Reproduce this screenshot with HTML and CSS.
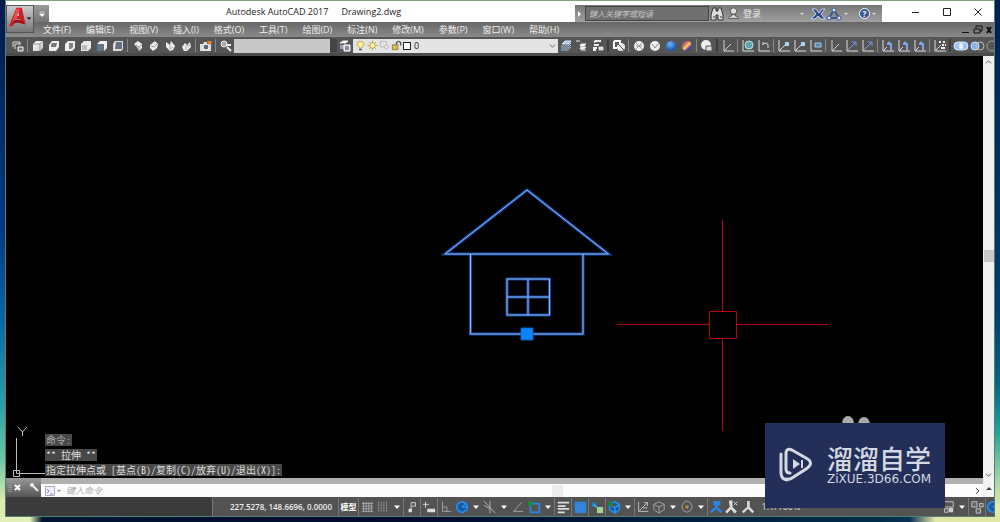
FILE: index.html
```html
<!DOCTYPE html>
<html lang="zh-CN">
<head>
<meta charset="utf-8">
<title>Autodesk AutoCAD 2017 Drawing2.dwg</title>
<link rel="stylesheet" href="styles.css">
</head>
<body>
<svg class="defs" aria-hidden="true">
  <defs>
    <linearGradient id="face" x1="0" y1="0" x2="1" y2="1"><stop offset="0" stop-color="#fff"/><stop offset="1" stop-color="#c4c4c4"/></linearGradient>
    <radialGradient id="blueball" cx=".4" cy=".3" r=".7"><stop offset="0" stop-color="#6bb5ff"/><stop offset="1" stop-color="#1454b0"/></radialGradient>
    <linearGradient id="goldball" x1="0" y1="0" x2="1" y2="1"><stop offset="0" stop-color="#8b40b0"/><stop offset=".3" stop-color="#c06a60"/><stop offset=".5" stop-color="#ffd060"/><stop offset=".7" stop-color="#6b3aa0"/><stop offset="1" stop-color="#4b2a90"/></linearGradient>
  </defs>
  <symbol id="views" viewBox="0 0 16 16"><path d="M3 9V4h7v2M5 11V6h6" fill="none" stroke="#ddd"/><path d="M8 9h5v4H8z" fill="#777" stroke="#fff"/></symbol>
  <symbol id="cube-top" viewBox="0 0 16 16"><path d="M3 6l3-3h7v7l-3 3H3z" fill="url(#face)"/><path d="M3 6h7v7M10 6l3-3" fill="none" stroke="#999"/></symbol>
  <symbol id="cube-bottom" viewBox="0 0 16 16"><path d="M3 7l3-4h7v6l-3 4H3z" fill="#eee"/><path d="M5 7l1-2h5l-1 4H5z" fill="#777"/></symbol>
  <symbol id="cube-left" viewBox="0 0 16 16"><path d="M3 6l3-3h7v7l-3 3H3z" fill="#ededed"/><path d="M7 5h4v4l-2 2H7z" fill="#808080"/></symbol>
  <symbol id="cube-front" viewBox="0 0 16 16"><path d="M3 6l3-3h7v7l-3 3H3z" fill="#e9e9e9"/><path d="M4 7h5v5H4z" fill="#bbb"/></symbol>
  <symbol id="cube-back" viewBox="0 0 16 16"><path d="M3 6l3-3h7v7l-3 3z" fill="#eee"/><path d="M3 6h7v7H3z" fill="#63728d"/></symbol>
  <symbol id="cube-right" viewBox="0 0 16 16"><path d="M3 6l2-3h8v8l-2 2H3z" fill="#ddd"/><path d="M6 4h6v7H5z" fill="#657080"/></symbol>
  <symbol id="iso-sw" viewBox="0 0 16 16"><path d="M4 6l4-3 4 3v4l-3 3-2-4z" fill="#eee"/><path d="M6 7l3 2 3-2M9 9v3" stroke="#999" fill="none"/></symbol>
  <symbol id="iso-nw" viewBox="0 0 16 16"><path d="M4 7l5-4 3 3-1 4-4 3-3-3z" fill="#eee"/><path d="M5 8l3 1 3-3" stroke="#999" fill="none"/></symbol>
  <symbol id="iso-se" viewBox="0 0 16 16"><path d="M4 4l4 3 1-4 4 5-2 4-3 1-4-4z" fill="#eee"/><path d="M8 7v4l3-2" stroke="#aaa" fill="none"/></symbol>
  <symbol id="iso-ne" viewBox="0 0 16 16"><path d="M12 4l-3 3-2-2-3 4 2 4h3l4-4z" fill="#eee"/><path d="M8 12V8l4-1" stroke="#aaa" fill="none"/></symbol>
  <symbol id="camera" viewBox="0 0 16 16"><path d="M2 6h3l1-2h3v2h4v7H2z" fill="#ddd"/><circle cx="8" cy="9" r="3" fill="#5b6877" stroke="#fff"/><path d="M9 3h4l1 2-3 2z" fill="#e98332"/></symbol>
  <symbol id="key" viewBox="0 0 16 16"><circle cx="6" cy="6" r="3" fill="#aaa" stroke="#eee"/><path d="M8 7h5M9 9l4 4" stroke="#eee" stroke-width="2"/></symbol>
  <symbol id="layerprops" viewBox="0 0 16 16"><path d="M3 5l3-2h5l-2 2zM3 8h5M3 10h5" fill="#fff" stroke="#eee"/><path d="M7 7h6v6H7z" fill="#ccd4e0" stroke="#fff"/><path d="M8 9h4M8 11h4" stroke="#446"/></symbol>
  <symbol id="layers-blue" viewBox="0 0 16 16"><path d="M4 6l3-3h6l-2 3z" fill="#a9c8ea" stroke="#d5e5f5"/><path d="M3 8h7l3-3M3 10h7l3-3M3 12h7l3-3" fill="none" stroke="#a2c0e0"/></symbol>
  <symbol id="layers" viewBox="0 0 16 16"><path d="M2 3h4M7 6h5l-2 2H6zM7 9h5l-2 2H6zM7 12h5" fill="#eee" stroke="#eee"/></symbol>
  <symbol id="layers-state" viewBox="0 0 16 16"><path d="M4 4l2-1h5M4 7h5M3 10h4M3 12h3" fill="none" stroke="#eee" stroke-width="2"/><path d="M8 8h6v5H8z" fill="#ddd" stroke="#444"/></symbol>
  <symbol id="match" viewBox="0 0 16 16"><path d="M3 3h6v3M3 3v7h3" fill="none" stroke="#fff" stroke-width="2"/><circle cx="10" cy="9" r="4" fill="#eee"/><path d="M7 6l6 6" stroke="#444"/></symbol>
  <symbol id="wire" viewBox="0 0 16 16"><circle cx="8" cy="8" r="5" fill="#eee"/><path d="M5 5l6 6M11 5l-6 6M5 8h6" stroke="#999"/></symbol>
  <symbol id="hidden" viewBox="0 0 16 16"><circle cx="8" cy="8" r="5" fill="#eee"/><path d="M5 6l3 4 4-5" stroke="#888" fill="none"/></symbol>
  <symbol id="realistic" viewBox="0 0 16 16"><circle cx="8" cy="8" r="5" fill="url(#blueball)"/></symbol>
  <symbol id="concept" viewBox="0 0 16 16"><circle cx="8" cy="8" r="5" fill="url(#goldball)"/></symbol>
  <symbol id="render" viewBox="0 0 16 16"><circle cx="7" cy="7" r="5" fill="#eee"/><path d="M7 8h6v5H7z" fill="#ddd" stroke="#555"/></symbol>
  <symbol id="ucs" viewBox="0 0 16 16"><path d="M4 2v11h10M4 13l7-7" fill="none" stroke="#ccd0d8"/></symbol>
  <symbol id="ucs-world" viewBox="0 0 16 16"><path d="M3 2v11h11" fill="none" stroke="#ddd"/><circle cx="9" cy="7" r="4" fill="#64a6b0" stroke="#bee3e5"/></symbol>
  <symbol id="ucs-prev" viewBox="0 0 16 16"><path d="M3 2v11h11M7 7V4M7 6q6-3 5 4" fill="none" stroke="#ddd"/></symbol>
  <symbol id="ucs-face" viewBox="0 0 16 16"><path d="M3 2v11h11M3 13l6-6" fill="none" stroke="#ddd"/><path d="M9 4h4v4H9z" fill="#a9d2f0"/></symbol>
  <symbol id="ucs-view" viewBox="0 0 16 16"><path d="M3 2v11h11" fill="none" stroke="#ddd"/><path d="M7 5h6v4H7z" fill="#4c87bb" stroke="#a7cbe8"/></symbol>
  <symbol id="ucs-z" viewBox="0 0 16 16"><path d="M3 2v11h11" fill="none" stroke="#ddd"/><path d="M4 12l8-8M8 4h4v4" fill="none" stroke="#779bee"/></symbol>
  <symbol id="ucs-rot" viewBox="0 0 16 16"><path d="M3 2v11h11M3 13l4-4" fill="none" stroke="#ddd"/><path d="M11 12V6L8 4M11 6H7" fill="none" stroke="#86a3e4" stroke-width="2"/></symbol>
  <symbol id="ucs-apply" viewBox="0 0 16 16"><path d="M3 2v11h11M4 12l5-5" fill="none" stroke="#ddd"/><path d="M7 4h2M11 4h2M10 7h2M13 7h1M9 10h4" fill="none" stroke="#eee" stroke-width="2"/></symbol>
  <symbol id="union" viewBox="0 0 16 16"><path d="M5 4h6a4 4 0 010 8H5a4 4 0 010-8z" fill="#9fc4f4" stroke="#dcebff"/><ellipse cx="8" cy="8" rx="2" ry="3" fill="#e9f3ff"/></symbol>
  <symbol id="subtract" viewBox="0 0 16 16"><circle cx="6" cy="8" r="4" fill="#83b0ed" stroke="#cfe2ff"/><circle cx="11" cy="8" r="4" fill="none" stroke="#bbb"/></symbol>
  <symbol id="intersect" viewBox="0 0 16 16"><circle cx="7" cy="8" r="5" fill="none" stroke="#9aa8a8"/></symbol>
  <symbol id="bulb" viewBox="0 0 16 16"><path d="M6 12v-2q-3-2-3-4a5 4 0 0110 0q0 2-3 4v2z" fill="#fff0a0" stroke="#a48a38"/><path d="M6 14h4" stroke="#555" stroke-width="2"/></symbol>
  <symbol id="sun" viewBox="0 0 16 16"><path d="M8 1v14M1 8h14M3 3l10 10M13 3L3 13" stroke="#9c8428"/><circle cx="8" cy="8" r="4" fill="#fff0a0" stroke="#a48a38"/></symbol>
  <symbol id="vpfreeze" viewBox="0 0 16 16"><path d="M2 2h9v8H2z" fill="none" stroke="#aaa"/><circle cx="11" cy="10" r="3" fill="#e8e8e8" stroke="#aaa"/></symbol>
  <symbol id="lock" viewBox="0 0 16 16"><path d="M2 7h8v7H2z" fill="#d9bc62" stroke="#7c661c"/><path d="M8 7V4q3-4 6 0v4" fill="none" stroke="#555" stroke-width="2"/></symbol>
  <symbol id="grid" viewBox="0 0 16 16"><path d="M4 2v12M7 2v12M10 2v12M13 2v12M2 4h13M2 7h13M2 10h13M2 13h13" stroke="#aaa"/></symbol>
  <symbol id="snapgrid" viewBox="0 0 16 16"><path d="M3 2v12M6 2v12M9 2v12M12 2v12" stroke="#aaa" stroke-dasharray="2 1"/></symbol>
  <symbol id="down" viewBox="0 0 16 16"><path d="M2 5h12l-6 7z" fill="#fff"/></symbol>
  <symbol id="infer" viewBox="0 0 16 16"><path d="M7 13V3h5v4H8" fill="none" stroke="#ddd"/><path d="M4 10h4v4H4z" fill="#ddd"/></symbol>
  <symbol id="dyn" viewBox="0 0 16 16"><path d="M1 5h7M4 2v7" stroke="#ddd"/><path d="M6 10h9v4H6z" fill="#ddd"/></symbol>
  <symbol id="ortho" viewBox="0 0 16 16"><path d="M4 2v11h10M4 8h5v5" fill="none" stroke="#aaa"/></symbol>
  <symbol id="polar" viewBox="0 0 16 16"><circle cx="8" cy="8" r="6" fill="#155da8" stroke="#268af0" stroke-width="2"/><path d="M8 8h6M8 8l4-4" stroke="#47a4ff"/></symbol>
  <symbol id="isodraft" viewBox="0 0 16 16"><path d="M1 1l13 14M8 1v14M1 6l7 4" stroke="#bbb"/></symbol>
  <symbol id="track" viewBox="0 0 16 16"><path d="M12 3L3 13h11" fill="none" stroke="#aaa"/></symbol>
  <symbol id="osnap" viewBox="0 0 16 16"><path d="M5 4h9v10H4V7" fill="none" stroke="#2687e8" stroke-width="2"/><circle cx="4" cy="4" r="3" fill="#168a42"/></symbol>
  <symbol id="weight" viewBox="0 0 16 16"><path d="M2 3h13M2 7h9M2 10h13M2 14h8" stroke="#ddd" stroke-width="2"/></symbol>
  <symbol id="transp" viewBox="0 0 16 16"><path d="M2 2h13v13H2z" fill="#2c82dc"/><path d="M2 6h13M2 10h13M6 2v13M10 2v13" stroke="#3a8bdd"/></symbol>
  <symbol id="cycle" viewBox="0 0 16 16"><path d="M2 3h5v5H2z" fill="#1683c6"/><path d="M4 5l6 5" stroke="#3aa5dc" stroke-width="2"/><path d="M8 8h7v7H8z" fill="#a9cf91"/></symbol>
  <symbol id="osnap3d" viewBox="0 0 16 16"><path d="M3 5l6-3 5 3v6l-5 4-6-4zM3 5l6 4 5-4M9 9v6" fill="#185496" stroke="#278be8" stroke-width="2"/><circle cx="4" cy="4" r="3" fill="#148346"/></symbol>
  <symbol id="dynucs" viewBox="0 0 16 16"><path d="M3 2v11h11M4 12l9-9M9 3h4v4M8 9h5" fill="none" stroke="#ccc"/></symbol>
  <symbol id="filter" viewBox="0 0 16 16"><path d="M2 5l6-3 6 3v6l-6 4-6-4zM2 5l6 3 6-3M8 8v7" fill="none" stroke="#aaa"/></symbol>
  <symbol id="gizmo" viewBox="0 0 16 16"><path d="M4 3l4-2 4 2 2 5-2 4-4 2-4-2-2-4z" fill="none" stroke="#aaa"/><circle cx="8" cy="8" r="2" fill="#b88c42"/></symbol>
  <symbol id="anno" viewBox="0 0 16 16"><path d="M7 1h3v7l5 5-2 2-5-5-5 5-2-2 6-5z" fill="currentColor"/></symbol>
  <symbol id="anno-view" viewBox="0 0 16 16"><path d="M5 1h8v5h-3v2l5 5-2 2-5-5-5 5-2-2 6-5V6H5z" fill="currentColor"/></symbol>
  <symbol id="anno-auto" viewBox="0 0 16 16"><path d="M5 1h3v7l5 5-2 2-4-5-5 5-1-2 5-5zM10 2l4 4M14 2l-4 4" fill="currentColor" stroke="currentColor"/></symbol>
  <symbol id="monitor" viewBox="0 0 16 16"><path d="M2 2h12v6H2zM4 10h4v4H4z" fill="none" stroke="#ccc"/><path d="M9 9h5v5H9z" fill="#ccc"/></symbol>
  <symbol id="isolate" viewBox="0 0 16 16"><path d="M2 2h6v6H2zM11 4h4v4h-4zM7 10h5v5H7z" fill="#666" stroke="#ccc"/></symbol>
  <symbol id="binoculars" viewBox="0 0 16 16"><path d="M4 2h3v3h2V2h3l2 7v5H9V9H7v5H2V9z" fill="#ddd" stroke="#333"/><path d="M4 11h2M11 11h2" stroke="#333"/></symbol>
  <symbol id="user" viewBox="0 0 16 16"><circle cx="8" cy="5" r="4" fill="#ddd" stroke="#444"/><path d="M2 14q0-3 4-3V9h4v2q4 0 4 3z" fill="#ddd" stroke="#444"/></symbol>
  <symbol id="exchange" viewBox="0 0 16 16"><path d="M2 3h4l3 4 3-4h3l-4 5 4 5h-4l-3-3-3 3H1l5-5z" fill="#304a91" stroke="#c5d1ed"/></symbol>
  <symbol id="a360" viewBox="0 0 16 16"><path d="M8 4l5 8H3z" fill="none" stroke="#3c5a93" stroke-width="2"/><g fill="#dde6f3" stroke="#3c5a93"><circle cx="8" cy="4" r="2"/><circle cx="3" cy="12" r="2"/><circle cx="13" cy="12" r="2"/></g></symbol>
</svg>

<main class="window">
  <header class="head">
    <button class="app" aria-label="应用程序菜单"><svg viewBox="0 0 28 28"><path d="M2 22L10 2h6l4 18-5-2-1-4H9l-2 7z" fill="#c9202b"/><path d="M10 3h4l-4 12-5 5z" fill="#ed4a50"/><path d="M11 10l1-3 1 4z" fill="#eee"/><path d="M7 16q6-3 11 1l1 3q-8-4-14 0z" fill="#9c121b"/><path d="M21 12h5l-2 3z" fill="#222"/></svg></button>
    <div class="title">
      <button class="quick" aria-label="自定义快速访问工具栏"><svg viewBox="0 0 16 16"><path d="M4 5h8M4 8h8l-4 4z" fill="#fff" stroke="#fff"/></svg></button>
      <h1><span>Autodesk AutoCAD 2017</span><span>Drawing2.dwg</span></h1>
      <div class="info">
        <span class="play"></span>
        <input class="search" type="text" placeholder="键入关键字或短语" aria-label="搜索">
        <button class="tool" aria-label="查找"><svg><use href="#binoculars"/></svg></button>
        <button class="login"><svg><use href="#user"/></svg><span>登录</span></button>
        <i class="caret"></i>
        <button class="tool" aria-label="Exchange"><svg><use href="#exchange"/></svg></button>
        <button class="tool" aria-label="A360"><svg><use href="#a360"/></svg></button>
        <i class="caret"></i>
        <button class="help" aria-label="帮助">?</button>
        <i class="caret"></i>
      </div>
      <div class="winbtns">
        <button aria-label="最小化"><svg viewBox="0 0 10 10"><path d="M1 5.500h7"/></svg></button>
        <button aria-label="最大化"><svg viewBox="0 0 10 10"><path d="M1.500 1.500h7v7h-7z"/></svg></button>
        <button aria-label="关闭"><svg viewBox="0 0 10 10"><path d="M1.500 1.500l7 7M8.500 1.500l-7 7"/></svg></button>
      </div>
    </div>
    <nav class="menu">
      <button>文件(F)</button><button>编辑(E)</button><button>视图(V)</button><button>插入(I)</button><button>格式(O)</button><button>工具(T)</button><button>绘图(D)</button><button>标注(N)</button><button>修改(M)</button><button>参数(P)</button><button>窗口(W)</button><button>帮助(H)</button>
      <svg class="mdi" viewBox="0 0 32 12"><path d="M1 8.500h7" stroke="#111"/><path d="M15 4V2h6v5h-2M13 5h6v4h-6z" fill="none" stroke="#111"/><path d="M26 3l4 6M30 3l-4 6" stroke="#111" stroke-width="2"/></svg>
    </nav>
  </header>

  <div class="toolbar">
    <button class="tool" aria-label="命名视图"><svg><use href="#views"/></svg></button><i class="sep"></i>
    <button class="tool" aria-label="俯视"><svg><use href="#cube-top"/></svg></button>
    <button class="tool" aria-label="仰视"><svg><use href="#cube-bottom"/></svg></button>
    <button class="tool" aria-label="左视"><svg><use href="#cube-left"/></svg></button>
    <button class="tool" aria-label="右视"><svg><use href="#cube-front"/></svg></button>
    <button class="tool" aria-label="前视"><svg><use href="#cube-back"/></svg></button>
    <button class="tool" aria-label="后视"><svg><use href="#cube-right"/></svg></button><i class="sep"></i>
    <button class="tool" aria-label="西南等轴测"><svg><use href="#iso-sw"/></svg></button>
    <button class="tool" aria-label="东南等轴测"><svg><use href="#iso-nw"/></svg></button>
    <button class="tool" aria-label="东北等轴测"><svg><use href="#iso-se"/></svg></button>
    <button class="tool" aria-label="西北等轴测"><svg><use href="#iso-ne"/></svg></button><i class="sep"></i>
    <button class="tool" aria-label="创建相机"><svg><use href="#camera"/></svg></button><i class="sep"></i>
    <button class="tool" aria-label="上一视图"><svg><use href="#key"/></svg></button>
    <select class="combo" aria-label="视图列表" disabled><option></option></select><i class="sep big"></i>
    <button class="tool" aria-label="图层特性"><svg><use href="#layerprops"/></svg></button>
    <button class="layer" aria-label="图层 0"><svg><use href="#bulb"/></svg><svg><use href="#sun"/></svg><svg><use href="#vpfreeze"/></svg><svg><use href="#lock"/></svg><i class="swatch"></i><span>0</span><svg class="chev" viewBox="0 0 8 8"><path d="M1 3l3 3 3-3"/></svg></button>
    <button class="tool" aria-label="置为当前"><svg><use href="#layers-blue"/></svg></button>
    <button class="tool" aria-label="上一个图层"><svg><use href="#layers"/></svg></button>
    <button class="tool" aria-label="图层状态"><svg><use href="#layers-state"/></svg></button><i class="sep wide"></i>
    <button class="tool" aria-label="二维线框"><svg><use href="#match"/></svg></button><i class="sep"></i>
    <button class="tool" aria-label="三维线框"><svg><use href="#wire"/></svg></button>
    <button class="tool" aria-label="三维隐藏"><svg><use href="#hidden"/></svg></button>
    <button class="tool" aria-label="真实"><svg><use href="#realistic"/></svg></button>
    <button class="tool" aria-label="概念"><svg><use href="#concept"/></svg></button><i class="sep"></i>
    <button class="tool" aria-label="视觉样式"><svg><use href="#render"/></svg></button><i class="sep wide"></i>
    <button class="tool" aria-label="UCS"><svg><use href="#ucs"/></svg></button><i class="sep"></i>
    <button class="tool" aria-label="世界"><svg><use href="#ucs-world"/></svg></button>
    <button class="tool" aria-label="上一个 UCS"><svg><use href="#ucs-prev"/></svg></button><i class="sep"></i>
    <button class="tool" aria-label="面 UCS"><svg><use href="#ucs-face"/></svg></button>
    <button class="tool" aria-label="对象 UCS"><svg><use href="#ucs-face"/></svg></button>
    <button class="tool" aria-label="视图 UCS"><svg><use href="#ucs-view"/></svg></button><i class="sep"></i>
    <button class="tool" aria-label="原点"><svg><use href="#ucs"/></svg></button>
    <button class="tool" aria-label="Z 轴矢量"><svg><use href="#ucs-z"/></svg></button>
    <button class="tool" aria-label="三点"><svg><use href="#ucs-z"/></svg></button><i class="sep"></i>
    <button class="tool" aria-label="X"><svg><use href="#ucs-rot"/></svg></button>
    <button class="tool" aria-label="Y"><svg><use href="#ucs-rot"/></svg></button>
    <button class="tool" aria-label="Z"><svg><use href="#ucs-rot"/></svg></button><i class="sep"></i>
    <button class="tool" aria-label="应用"><svg><use href="#ucs-apply"/></svg></button><i class="sep wide"></i>
    <button class="tool" aria-label="并集"><svg><use href="#union"/></svg></button>
    <button class="tool" aria-label="差集"><svg><use href="#subtract"/></svg></button>
    <button class="tool" aria-label="交集"><svg><use href="#intersect"/></svg></button>
  </div>

  <section class="work">
    <div class="canvas">
      <svg class="drawing" viewBox="6 56 977 422" role="img" aria-label="房屋图形">
        <g class="glow"><path d="M445 254L527 190L608.500 254ZM470.500 254V334H583V254M507 279H549.500V315H507ZM528 279V315M507 297H549"/></g>
        <g class="house"><path d="M445 254L527 190L608.500 254ZM470.500 254V334H583V254M507 279H549.500V315H507ZM528 279V315M507 297H549"/></g>
        <path d="M521 328h12v12h-12z" fill="#0c84ff" stroke="#0b60bd"/>
        <path class="cross" d="M617 324.500h92M737 324.500h91M722.500 220v91M722.500 339v92M709.500 311.500h27v27h-27z"/>
        <path d="M16.500 438V473.500H45M13.500 470.500h6v6h-6zM18 427l4.500 5 4.500-5M22.500 432v4M54 467l3-2M60 467l3-2" fill="none" stroke="#bbb"/>
        <g fill="#aaa"><ellipse cx="848" cy="424" rx="6" ry="8"/><ellipse cx="864" cy="425" rx="6" ry="8"/></g>
      </svg>
      <div class="history"><p>命令:</p><p>** 拉伸 **</p><p>指定拉伸点或 [基点(B)/复制(C)/放弃(U)/退出(X)]:</p></div>
    </div>
    <div class="vscroll"><svg viewBox="0 0 8 8"><path d="M1 5l3-3 3 3"/></svg><i class="thumb"></i><svg viewBox="0 0 8 8"><path d="M1 3l3 3 3-3"/></svg></div>
  </section>

  <div class="command">
    <div class="grip"><svg viewBox="0 0 36 18"><path d="M3 7v8M5 7v8" stroke="#aaa" stroke-dasharray="1 1"/><path d="M9 7l5 5M14 7l-5 5" stroke="#fff" stroke-width="2"/><path d="M26 7l6 6" stroke="#eee" stroke-width="2"/><circle cx="26" cy="7" r="2" fill="#eee"/></svg></div>
    <div class="entry"><svg viewBox="0 0 20 12"><path d="M4.500 1.500h9v9h-9z" fill="#eef" stroke="#aab"/><path d="M6 4l2 2-2 2M9 9h3" fill="none" stroke="#889"/><path d="M16 5h4l-2 2z" fill="#888"/></svg><input type="text" placeholder="键入命令" aria-label="键入命令"><i class="hthumb"></i><svg class="more" viewBox="0 0 8 8"><path d="M2 1l3 3-3 3"/></svg></div>
    <div class="up"><i></i></div>
  </div>

  <footer class="status">
    <div class="tray">
      <span class="coords">227.5278, 148.6696, 0.0000</span><i></i>
      <button class="model">模型</button><i></i>
      <button aria-label="栅格"><svg><use href="#grid"/></svg></button>
      <button aria-label="捕捉"><svg><use href="#snapgrid"/></svg></button>
      <button class="dd" aria-label="捕捉选项"><svg><use href="#down"/></svg></button><i></i>
      <button aria-label="推断约束"><svg><use href="#infer"/></svg></button><i></i>
      <button aria-label="动态输入"><svg><use href="#dyn"/></svg></button><i></i>
      <button aria-label="正交"><svg><use href="#ortho"/></svg></button>
      <button aria-label="极轴"><svg><use href="#polar"/></svg></button>
      <button class="dd" aria-label="极轴选项"><svg><use href="#down"/></svg></button>
      <button aria-label="等轴测草图"><svg><use href="#isodraft"/></svg></button>
      <button class="dd" aria-label="等轴测选项"><svg><use href="#down"/></svg></button>
      <button aria-label="对象追踪"><svg><use href="#track"/></svg></button>
      <button aria-label="对象捕捉"><svg><use href="#osnap"/></svg></button>
      <button class="dd" aria-label="捕捉设置"><svg><use href="#down"/></svg></button><i></i>
      <button aria-label="线宽"><svg><use href="#weight"/></svg></button><i></i>
      <button aria-label="透明度"><svg><use href="#transp"/></svg></button><i></i>
      <button aria-label="选择循环"><svg><use href="#cycle"/></svg></button><i></i>
      <button aria-label="三维捕捉"><svg><use href="#osnap3d"/></svg></button>
      <button class="dd" aria-label="三维捕捉选项"><svg><use href="#down"/></svg></button><i></i>
      <button aria-label="动态 UCS"><svg><use href="#dynucs"/></svg></button>
      <button aria-label="过滤"><svg><use href="#filter"/></svg></button>
      <button class="dd" aria-label="过滤选项"><svg><use href="#down"/></svg></button>
      <button aria-label="小控件"><svg><use href="#gizmo"/></svg></button>
      <button class="dd" aria-label="小控件选项"><svg><use href="#down"/></svg></button><i></i>
      <button class="on" aria-label="注释可见性"><svg><use href="#anno-view"/></svg></button>
      <button aria-label="自动缩放"><svg><use href="#anno-auto"/></svg></button>
      <button aria-label="注释比例"><svg><use href="#anno"/></svg></button>
      <button class="scale">1:1/100%</button>
      <span class="spring"></span>
      <button aria-label="硬件加速"><svg><use href="#monitor"/></svg></button>
      <button class="dd" aria-label="更多"><svg><use href="#down"/></svg></button><i></i>
      <button aria-label="隔离对象"><svg><use href="#isolate"/></svg></button><i></i>
      <button class="half" aria-label="自定义"><svg><use href="#polar"/></svg></button>
    </div>
  </footer>
</main>

<aside class="brand">
  <svg viewBox="0 0 36 36"><path d="M3 8v19q0 6 6 7M8 6v17q0 4 4 4M8 6q1-4 6-2l14 8q9 5 0 11l-14 9q-3 2-6 1" fill="none" stroke="#d3d8e2" stroke-width="3" stroke-linecap="round"/><path d="M15 13l7 5-7 5z" fill="#d3d8e2"/><path d="M24 14v8" stroke="#d3d8e2" stroke-width="2"/></svg>
  <div><strong>溜溜自学</strong><small>ZiXUE.3D66.COM</small></div>
</aside>
</body>
</html>
```
FILE: styles.css
```css
* { box-sizing: border-box; }
body {
  margin: 0;
  min-height: 100vh;
  display: flex;
  padding: 0 5px 5px;
  position: relative;
  overflow: hidden;
  font: 9px/12px "Open Sans", "Noto Sans CJK SC", sans-serif;
  background:
    linear-gradient(90deg, #e4eeb8 0, #e4eeb8 30px, #021634 42px, #000a2c 400px, #012c4a 880px, #0c3355 910px, #dfe6a6 935px) bottom / 100% 6px no-repeat,
    linear-gradient(#001a4c, #003a82 45%, #0a6aa4 62%, #2fa0a8 78%, #6cc4a4 88%, #dfeab0 96%) left / 50% 100% no-repeat,
    linear-gradient(#001f50, #003c6c 60%, #006a84 74%, #1fa79c 83%, #8ccca0 90%, #e6e8ae 97%);
}
button, input, select { font: inherit; margin: 0; padding: 0; border: 0; background: none; color: inherit; }
svg { display: block; }
.defs { position: absolute; width: 0; height: 0; }
.window { flex: 1; min-width: 0; display: flex; flex-direction: column; border: 1px solid #4f8270; border-top-color: #7ba283; background: #3d3d3d; }

.head { display: grid; grid-template-columns: 28px minmax(0, 1fr); grid-template-rows: 21px 15px; background: linear-gradient(#fff 21px, #6a6a6a 21px, #8b8b8b); }
.app { grid-row: 1 / 3; align-self: start; margin-top: 4px; height: 28px; background: linear-gradient(#ccc, #777); border: 1px solid #555; }
.app svg { width: 26px; height: 26px; }
.title { display: flex; background: #fff; }
.quick { flex: none; width: 15px; margin-top: 4px; background: linear-gradient(#999, #777); }
.quick svg { width: 10px; margin: auto; }
.title h1 { margin: 0 auto 0 177px; display: flex; gap: 13px; align-items: center; font-size: 9px; font-weight: 400; color: #222; white-space: nowrap; }
.info { flex: none; margin-top: 4px; display: flex; align-items: center; background: linear-gradient(#777, #a0a0a0); color: #eee; }
.play { border: 3px solid transparent; border-left-color: #fff; border-right: 0; margin: 0 4px 0 3px; }
.search { width: 124px; height: 15px; padding-left: 3px; border: 1px solid #444; background: #707070; font-style: italic; font-size: 8px; }
.search::placeholder { color: #c4c4c4; opacity: 1; }
.login { display: flex; align-items: center; width: 73px; gap: 3px; }
.info svg { width: 13px; height: 13px; margin: auto; }
.login svg { margin: 0 0 0 2px; }
.caret { border: 2px solid transparent; border-top-color: #ddd; border-bottom: 0; margin: 0 6px 0 2px; }
.help { width: 11px; height: 11px; margin-left: 5px; border-radius: 50%; background: #35568e; border: 1px solid #fff; color: #fff; font-size: 8px; line-height: 9px; font-weight: 700; }
.winbtns { flex: none; display: flex; margin-left: 18px; padding-right: 1px; }
.winbtns button { width: 31px; }
.winbtns svg { width: 10px; height: 10px; margin: auto; fill: none; stroke: #222; }
.menu { display: flex; align-items: center; gap: 15px; padding-left: 9px; background: linear-gradient(#666, #8a8a8a); color: #eee; }
.menu button { white-space: nowrap; }
.mdi { width: 32px; height: 12px; margin-left: auto; margin-right: 1px; }

.toolbar { display: flex; align-items: center; height: 19px; padding: 1px 0 0 4px; overflow: hidden; background: #555; border-bottom: 3px solid #4a4a4a; }
.tool { flex: none; width: 16px; height: 16px; }
.tool svg { width: 16px; height: 16px; }
.sep { flex: none; width: 4px; height: 13px; background: linear-gradient(90deg, transparent 1px, #888 1px, #888 2px, transparent 2px); }
.sep.wide { width: 5px; background: linear-gradient(90deg, transparent 1px, #3c3c3c 1px, #3c3c3c 3px, transparent 3px); }
.sep.big { width: 7px; background: #444; }
.combo { flex: none; width: 96px; height: 14px; background: #c8c8c8; opacity: 1; appearance: none; }
.layer { flex: none; width: 205px; display: flex; align-items: center; gap: 1px; height: 14px; padding: 0 2px; background: #e4e4e4; color: #222; }
.layer svg { width: 11px; height: 11px; flex: none; }
.swatch { width: 8px; height: 8px; border: 1px solid #222; background: #fff; }
.layer span { margin-left: 2px; }
.layer .chev, .vscroll svg, .more { width: 7px; height: 7px; margin-left: auto; fill: none; stroke: #555; }

.work { flex: 1; min-height: 0; display: flex; background: #000; }
.canvas { flex: 1; min-width: 0; position: relative; }
.drawing { position: absolute; inset: 0; width: 100%; height: 100%; }
.glow { fill: none; stroke: #174a9b; stroke-width: 3; }
.house { fill: none; stroke: #8fb5fb; stroke-width: 1; }
.cross { fill: none; stroke: #b4060a; }
.history { position: absolute; left: 39px; bottom: 2px; display: flex; flex-direction: column; align-items: flex-start; gap: 3px; font: 10px/12px "Noto Sans CJK SC", monospace; font-feature-settings: "hwid"; color: #ddd; }
.history p { margin: 0; padding: 0 1px; background: #484848; white-space: nowrap; }
.history p:first-child { color: #aaa; }
.vscroll { width: 11px; display: flex; flex-direction: column; justify-content: space-between; align-items: center; padding-top: 3px; background: #f0f0f0; }
.vscroll svg { margin: 0; }
.thumb { width: 10px; height: 12px; margin-bottom: 26px; background: #c8c8c8; }

.command { display: flex; height: 19px; }
.grip { width: 35px; background: linear-gradient(#999, #555); }
.grip svg { width: 36px; height: 18px; }
.entry { flex: 1; display: flex; align-items: center; padding-top: 6px; background: linear-gradient(#b0b0b0 6px, #fcfcfc 6px); }
.entry svg { width: 20px; height: 12px; }
.entry input { width: 100px; margin-left: 5px; font-style: italic; color: #444; }
.entry input::placeholder { color: #aaa; opacity: 1; }
.hthumb { width: 11px; height: 12px; margin-left: 386px; background: #ececec; }
.entry .more { width: 8px; height: 8px; margin-right: 1px; }
.up { width: 11px; padding: 9px 3px 0; background: #f4f4f4; }
.up i { display: block; border: 3px solid transparent; border-bottom-color: #444; border-top: 0; }

.status { height: 19px; padding-left: 206px; background: #3b3b3b; color: #eee; }
.tray { height: 100%; display: flex; align-items: center; padding-left: 17px; background: #535353; border-left: 1px solid #777; overflow: hidden; }
.tray i { flex: none; width: 1px; height: 18px; background: #777; }
.tray button { flex: none; width: 16px; color: #ddd; }
.tray svg { width: 14px; height: 14px; margin: auto; }
.tray .dd { width: 12px; }
.tray .dd svg { width: 8px; height: 8px; }
.tray .on { color: #2786e6; }
.tray .model { width: 19px; color: #fff; font-size: 8px; font-weight: 600; }
.tray .scale { width: 50px; }
.tray .half { width: 8px; }
.coords { flex: none; width: 108px; white-space: nowrap; font-size: 8px; font-weight: 600; }
.spring { flex: 1; }

.brand { position: absolute; right: 55px; bottom: 14px; width: 180px; height: 85px; display: flex; align-items: center; gap: 13px; padding: 0 0 4px 13px; background: #232f58; color: #d3d8e2; }
.brand svg { width: 36px; height: 36px; }
.brand strong { display: block; font: 500 26px/30px "Noto Sans CJK SC", sans-serif; }
.brand small { display: block; font: 12px/12px "DejaVu Sans", sans-serif; }
```
